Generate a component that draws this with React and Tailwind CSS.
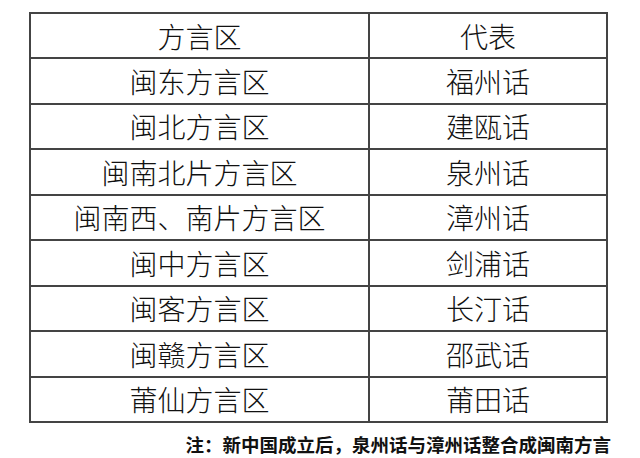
const rows = [
  ['闽东方言区', '福州话'],
  ['闽北方言区', '建瓯话'],
  ['闽南北片方言区', '泉州话'],
  ['闽南西、南片方言区', '漳州话'],
  ['闽中方言区', '剑浦话'],
  ['闽客方言区', '长汀话'],
  ['闽赣方言区', '邵武话'],
  ['莆仙方言区', '莆田话'],
]

export default function App() {
  return (
    <div
      className="w-[640px] h-[458px] bg-white text-[#111] pt-[12px] pl-[29px]"
      style={{ fontFamily: '"Noto Sans CJK SC", "Noto Sans", sans-serif' }}
    >
      <table className="w-[579px] border-collapse border-2 border-[#444] text-[28px] font-light">
        <tbody>
          <tr className="h-[45px]">
            <td className="w-[339px] border-2 border-[#444] text-center leading-none p-0">方言区</td>
            <td className="border-2 border-[#444] text-center leading-none p-0">代表</td>
          </tr>
          {rows.map(([area, rep]) => (
            <tr key={area} className="h-[45.5px]">
              <td className="border-2 border-[#444] text-center leading-none p-0">{area}</td>
              <td className="border-2 border-[#444] text-center leading-none p-0">{rep}</td>
            </tr>
          ))}
        </tbody>
      </table>
      <div className="w-[582px] text-right text-[18.5px] font-bold leading-none mt-[12px]">
        注：新中国成立后，泉州话与漳州话整合成闽南方言
      </div>
    </div>
  )
}
